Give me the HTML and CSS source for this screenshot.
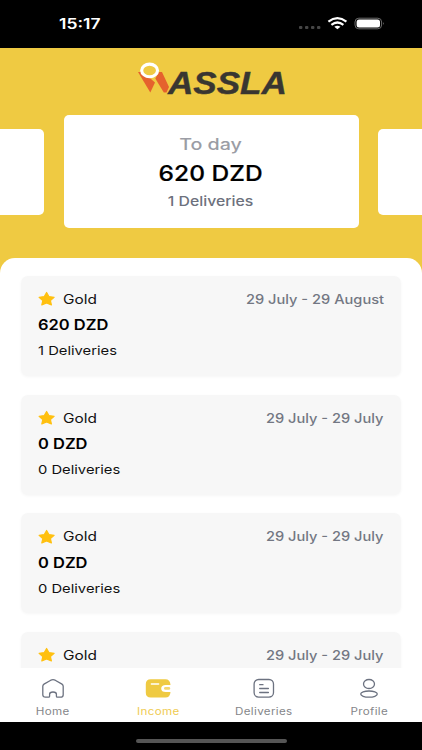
FILE: index.html
```
<!DOCTYPE html>
<html lang="en">
<head>
	<meta charset="UTF-8">
	<title>Wassla - Income</title>
	<link rel="stylesheet" href="styles.css">
</head>
<body>
	<!-- status bar -->
	<div class="status">
		<span class="time">15:17</span>
		<svg class="status-icons" width="88" height="16" viewBox="0 0 88 16">
			<g fill="#464646">
				<rect x="1" y="10" width="3.4" height="3" rx="1"/>
				<rect x="7" y="10" width="3.4" height="3" rx="1"/>
				<rect x="13" y="10" width="3.4" height="3" rx="1"/>
				<rect x="19" y="10" width="3.4" height="3" rx="1"/>
			</g>
			<g fill="none" stroke="#fff" stroke-width="2.2">
				<path d="M30.4 5.6Q39.4-1.2 48.4 5.6"/>
				<path d="M33.4 8.8Q39.4 4.2 45.4 8.8"/>
			</g>
			<path d="M36.3 10.7Q39.4 8.6 42.5 10.7L39.4 13.2Z" fill="#fff"/>
			<rect x="57" y="2.2" width="26.6" height="10.6" rx="3.8" fill="none" stroke="#6b6b6b"/>
			<rect x="58.6" y="3.6" width="23.4" height="7.8" rx="2.5" fill="#fff"/>
			<path d="M85 6q1.6 1.5 0 3z" fill="#777"/>
		</svg>
	</div>

	<!-- header -->
	<div class="header">
		<div class="logo">
			<svg width="32" height="32" viewBox="0 0 32 32">
				<path d="M1 10H6L18 20.5L13.3 30.5Z" fill="#e5622d"/>
				<path d="M18.3 16.5L22 10H25L32 25L29.5 30.6H26.8Z" fill="#e5622d"/>
				<ellipse cx="12.6" cy="8.4" rx="7.9" ry="6.3" fill="#efca42" stroke="#fff" stroke-width="3.1"/>
			</svg>
			<span class="brand">ASSLA</span>
		</div>
		<div class="slider">
			<div class="side prev"></div>
			<div class="today">
				<span class="label">To day</span>
				<span class="total">620 DZD</span>
				<span class="count">1 Deliveries</span>
			</div>
			<div class="side next"></div>
		</div>
	</div>

	<!-- income list -->
	<div class="list">
		<div class="card">
			<div class="row">
				<svg class="star" width="18" height="16" viewBox="0 0 18 16"><path d="M8.6 1.5L10.9 5.6 16.1 6.3 12.4 9.6 13.4 14 8.6 11.9 3.8 14 4.8 9.6 1.1 6.3 6.3 5.6Z"/></svg>
				<span class="level">Gold</span>
				<span class="date">29 July - 29 August</span>
			</div>
			<div class="amount">620 DZD</div>
			<div class="deliveries">1 Deliveries</div>
		</div>
		<div class="card">
			<div class="row">
				<svg class="star" width="18" height="16" viewBox="0 0 18 16"><path d="M8.6 1.5L10.9 5.6 16.1 6.3 12.4 9.6 13.4 14 8.6 11.9 3.8 14 4.8 9.6 1.1 6.3 6.3 5.6Z"/></svg>
				<span class="level">Gold</span>
				<span class="date">29 July - 29 July</span>
			</div>
			<div class="amount">0 DZD</div>
			<div class="deliveries">0 Deliveries</div>
		</div>
		<div class="card">
			<div class="row">
				<svg class="star" width="18" height="16" viewBox="0 0 18 16"><path d="M8.6 1.5L10.9 5.6 16.1 6.3 12.4 9.6 13.4 14 8.6 11.9 3.8 14 4.8 9.6 1.1 6.3 6.3 5.6Z"/></svg>
				<span class="level">Gold</span>
				<span class="date">29 July - 29 July</span>
			</div>
			<div class="amount">0 DZD</div>
			<div class="deliveries">0 Deliveries</div>
		</div>
		<div class="card">
			<div class="row">
				<svg class="star" width="18" height="16" viewBox="0 0 18 16"><path d="M8.6 1.5L10.9 5.6 16.1 6.3 12.4 9.6 13.4 14 8.6 11.9 3.8 14 4.8 9.6 1.1 6.3 6.3 5.6Z"/></svg>
				<span class="level">Gold</span>
				<span class="date">29 July - 29 July</span>
			</div>
		</div>
	</div>

	<!-- tabs -->
	<div class="tabs">
		<div class="tab">
			<svg width="26" height="22" viewBox="0 0 26 22">
				<path d="M8.6 19.2H5.4Q2.8 19.2 2.8 16.7V8.3Q2.8 6.9 4 6.1L10.8 2.2Q13 1.1 15.2 2.2L22 6.1Q23.2 6.9 23.2 8.3V16.7Q23.2 19.2 20.6 19.2H17.4Q16.4 19.2 16.4 18.2V16.2Q16.4 14 13 14T9.6 16.2V18.2Q9.6 19.2 8.6 19.2Z"/>
			</svg>
			<span>Home</span>
		</div>
		<div class="tab cur">
			<svg width="26" height="22" viewBox="0 0 26 22">
				<path class="fill" d="M5.8 1.2H20.3Q25.2 1.2 25.5 6.9H20.8Q16.2 6.9 16.2 10.4T20.8 13.9H25.5Q25.2 19.6 20.3 19.6H5.8Q.8 19.6 .8 14.8V6Q.8 1.2 5.8 1.2Z"/>
				<rect class="pocket" x="19" y="9" width="6.2" height="2.8" rx="1.4"/>
				<path class="line" d="M6.4 6H13.6"/>
			</svg>
			<span>Income</span>
		</div>
		<div class="tab">
			<svg width="26" height="22" viewBox="0 0 26 22">
				<rect x="3.1" y="1.5" width="19.4" height="17.6" rx="4.5"/>
				<path d="M8.7 6.7H12M8.7 10.5H17.4M8.7 14.5H17.4"/>
			</svg>
			<span>Deliveries</span>
		</div>
		<div class="tab">
			<svg width="26" height="22" viewBox="0 0 26 22">
				<ellipse cx="13" cy="6" rx="5.5" ry="4.5"/>
				<ellipse cx="13" cy="16.1" rx="8.3" ry="3.1"/>
			</svg>
			<span>Profile</span>
		</div>
	</div>

	<div class="bottom"><div class="indicator"></div></div>
</body>
</html>
```
FILE: styles.css
```
*{
	box-sizing: border-box;
}
body{
	margin:0;
	width:422px;
	height:750px;
	overflow: hidden;
	display: flex;
	flex-direction: column;
	background:#efca42;
	font-family: Inter, "Noto Sans", sans-serif;
}
svg{
	display: block;
	flex:none;
}
span{
	white-space: nowrap;
}

/* status bar */
.status{
	flex:none;
	height:48px;
	padding:16px 36px 0 59px;
	display: flex;
	justify-content: space-between;
	background:#000;
	color:#fff;
}
.time{
	font-size: 14px;
	line-height: 16px;
	font-weight: 600;
	transform: scaleX(1.25);
	transform-origin: left;
}

/* header */
.header{
	flex:none;
	height:210px;
}
.logo{
	height:67.4px;
	padding:14px 0 0 137px;
	display: flex;
}
.brand{
	margin-left:-1px;
	padding-top:6px;
	color:#393631;
	font:italic bold 30.5px/30px "Liberation Sans", sans-serif;
	-webkit-text-stroke:.4px #393631;
	transform: scaleX(1.15);
	transform-origin: left;
}
.slider{
	display: flex;
	justify-content: space-between;
	align-items: center;
}
.side{
	width:44.4px;
	height:86px;
	background:#fff;
}
.prev{
	border-radius: 0 5px 5px 0;
}
.next{
	border-radius: 5px 0 0 5px;
}
.today{
	width:295px;
	height:112.6px;
	padding-top:16.6px;
	border-radius: 5px;
	background:#fff;
	display: flex;
	flex-direction: column;
	align-items: center;
}
.label{
	font-size: 16px;
	line-height: 24px;
	font-weight: 500;
	color:#9b9da5;
	transform: scaleX(1.23);
}
.total{
	font-size: 21.5px;
	line-height: 34px;
	font-weight: 500;
	color:#000;
	-webkit-text-stroke:.2px #000;
	transform: scaleX(1.14);
}
.count{
	font-size: 13.5px;
	line-height: 23px;
	font-weight: 500;
	color:#6d717d;
	transform: scaleX(1.17);
}

/* income list */
.list{
	flex:none;
	height:410px;
	padding:18.2px 21px 0;
	border-radius: 15px 15px 0 0;
	overflow: hidden;
	background:#fff;
}
.card{
	height:100px;
	margin-bottom:18.6px;
	padding:13.3px 17px 0;
	border-radius: 7px;
	background:#f7f7f7;
	box-shadow: 0 1px 3px rgba(0,0,0,.04);
}
.row{
	height:20px;
	display: flex;
	align-items: center;
}
.star{
	fill:#ffc010;
	stroke:#ffc010;
	stroke-width: 1.2;
	stroke-linejoin: round;
}
.level{
	margin-left:7px;
	font-size: 12.5px;
	color:#111;
	transform: scaleX(1.23);
	transform-origin: left;
}
.date{
	margin-left:auto;
	font-size: 12.5px;
	font-weight: 500;
	color:#737783;
	transform: scaleX(1.17);
	transform-origin: right;
}
.amount{
	width:max-content;
	font-size: 14.5px;
	line-height: 31px;
	font-weight: 600;
	color:#000;
	transform: scaleX(1.135);
	transform-origin: left;
}
.deliveries{
	width:max-content;
	font-size: 12px;
	line-height: 21px;
	color:#111;
	transform: scaleX(1.23);
	transform-origin: left;
}

/* tabs */
.tabs{
	flex:none;
	height:54px;
	display: flex;
	background:#fff;
}
.tab{
	flex:1;
	padding-top:10px;
	display: flex;
	flex-direction: column;
	align-items: center;
	color:#85868a;
}
.tab svg{
	fill:none;
	stroke:#6c7280;
	stroke-width: 1.3;
	stroke-linecap: round;
}
.tab span{
	font-size: 10px;
	line-height: 22px;
	letter-spacing: .3px;
	transform: scaleX(1.16);
}
.tab.cur{
	color:#efcb52;
}
.cur .fill{
	fill:#efca42;
	stroke:none;
}
.cur .pocket{
	fill:#f3d670;
	stroke:none;
}
.cur .line{
	stroke:#fff;
	stroke-width: 1.6;
}

.bottom{
	flex:none;
	height:28px;
	padding-top:17px;
	background:#000;
}
.indicator{
	width:151px;
	height:4px;
	margin:0 auto;
	border-radius: 2px;
	background:#555;
}
```
